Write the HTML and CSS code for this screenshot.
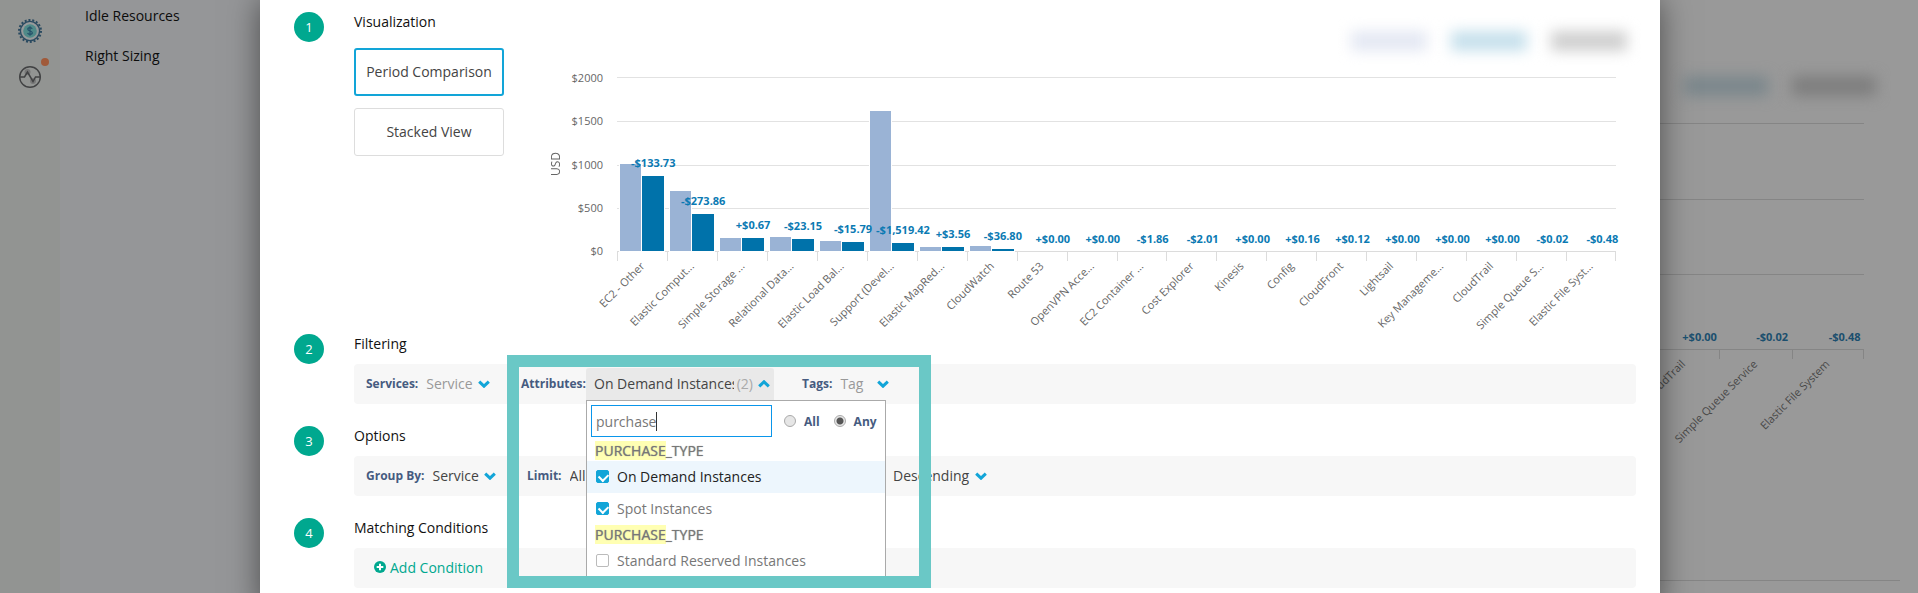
FILE: index.html
```html
<!DOCTYPE html>
<html lang="en">
<head>
<meta charset="utf-8">
<title>Cost report</title>
<link rel="stylesheet" href="styles.css">
</head>
<body>
<svg class="sprite" aria-hidden="true">
  <symbol id="chevron" viewBox="0 0 12 8"><path d="M1.2 1.6 6 6.2 10.8 1.6" fill="none" stroke="currentColor" stroke-width="3"/></symbol>
</svg>
<div class="page">
  <aside class="rail">
    <a class="rail-link" href="#costs" aria-label="Costs">
      <svg width="24" height="24" viewBox="0 0 24 24">
        <circle cx="12" cy="12" r="11" fill="none" stroke="#2a4a60" stroke-width="2" stroke-dasharray="2 1.84"/>
        <circle cx="12" cy="12" r="9.6" fill="#979a9b" stroke="#2a4a60" stroke-width="1.4"/>
        <circle cx="12" cy="12" r="6.8" fill="#4f8a89"/>
        <path d="M14.2 9.9c-.3-.8-1.100-1.200-2.200-1.200-1.300 0-2.200.6-2.200 1.600 0 2.300 4.500 1.100 4.500 3.500 0 1-.9 1.600-2.300 1.600-1.200 0-2.100-.5-2.400-1.400M12 7.300v9.400" fill="none" stroke="#24506a" stroke-width="1.200"/>
      </svg>
    </a>
    <a class="rail-link" href="#health" aria-label="Health">
      <svg width="24" height="24" viewBox="0 0 24 24">
        <circle cx="9.500" cy="7" r="3" fill="#777"/><circle cx="15" cy="16" r="3" fill="#777"/>
        <circle cx="12" cy="12" r="10.300" fill="none" stroke="#414243" stroke-width="1.400"/>
        <path d="M2 12h4.500L9.500 7l5.500 9.500 2.500-4.500H22" fill="none" stroke="#414243" stroke-width="1.500"/>
      </svg>
      <span class="dot"></span>
    </a>
  </aside>
  <nav class="nav">
    <a href="#idle">Idle Resources</a>
    <a href="#sizing">Right Sizing</a>
  </nav>
  <main class="report">
    <div class="totals totals-back" aria-hidden="true"><span class="blob blob-blue"></span><span class="blob blob-grey"></span></div>
    <div class="plot plot-back">
      <div class="lines"><i></i><i></i><i></i></div>
      <ol class="cols">
        <li class="col"><span class="bar"></span><span class="bar"><b class="delta">+$0.00</b></span><span class="cat">CloudTrail</span></li>
        <li class="col"><span class="bar"></span><span class="bar"><b class="delta">-$0.02</b></span><span class="cat">Simple Queue Service</span></li>
        <li class="col"><span class="bar"></span><span class="bar"><b class="delta">-$0.48</b></span><span class="cat">Elastic File System</span></li>
      </ol>
    </div>
    <hr class="rule">
  </main>
</div>

<div class="overlay">
  <div class="modal" role="dialog" aria-label="Edit report">
    <section class="step step-chart">
      <span class="num">1</span>
      <div class="body">
        <h2>Visualization</h2>
        <div class="viz">
          <div class="views">
            <button class="view view-on" type="button">Period Comparison</button>
            <button class="view" type="button">Stacked View</button>
          </div>
          <div class="chart">
            <div class="totals" aria-hidden="true"><span class="blob blob-pale"></span><span class="blob blob-blue"></span><span class="blob blob-grey"></span></div>
            <div class="graph">
              <span class="unit">USD</span>
              <div class="scale"><span>$2000</span><span>$1500</span><span>$1000</span><span>$500</span><span>$0</span></div>
              <div class="plot">
                <div class="lines"><i></i><i></i><i></i><i></i></div>
                <ol class="cols">
                  <li class="col"><span class="bar prev" style="height:50%"></span><span class="bar cur" style="height:43%"><b class="delta">-$133.73</b></span><span class="cat">EC2 - Other</span></li>
                  <li class="col"><span class="bar prev" style="height:34.5%"></span><span class="bar cur" style="height:21.3%"><b class="delta">-$273.86</b></span><span class="cat">Elastic Comput...</span></li>
                  <li class="col"><span class="bar prev" style="height:7.5%"></span><span class="bar cur" style="height:7.5%"><b class="delta">+$0.67</b></span><span class="cat">Simple Storage ...</span></li>
                  <li class="col"><span class="bar prev" style="height:8.1%"></span><span class="bar cur" style="height:6.9%"><b class="delta">-$23.15</b></span><span class="cat">Relational Data...</span></li>
                  <li class="col"><span class="bar prev" style="height:5.8%"></span><span class="bar cur" style="height:5.2%"><b class="delta">-$15.79</b></span><span class="cat">Elastic Load Bal...</span></li>
                  <li class="col"><span class="bar prev" style="height:80.5%"></span><span class="bar cur" style="height:4.6%"><b class="delta">-$1,519.42</b></span><span class="cat">Support (Devel...</span></li>
                  <li class="col"><span class="bar prev" style="height:2.3%"></span><span class="bar cur" style="height:2.4%"><b class="delta">+$3.56</b></span><span class="cat">Elastic MapRed...</span></li>
                  <li class="col"><span class="bar prev" style="height:3%"></span><span class="bar cur" style="height:1.2%"><b class="delta">-$36.80</b></span><span class="cat">CloudWatch</span></li>
                  <li class="col"><span class="bar"></span><span class="bar"><b class="delta">+$0.00</b></span><span class="cat">Route 53</span></li>
                  <li class="col"><span class="bar"></span><span class="bar"><b class="delta">+$0.00</b></span><span class="cat">OpenVPN Acce...</span></li>
                  <li class="col"><span class="bar"></span><span class="bar"><b class="delta">-$1.86</b></span><span class="cat">EC2 Container ...</span></li>
                  <li class="col"><span class="bar"></span><span class="bar"><b class="delta">-$2.01</b></span><span class="cat">Cost Explorer</span></li>
                  <li class="col"><span class="bar"></span><span class="bar"><b class="delta">+$0.00</b></span><span class="cat">Kinesis</span></li>
                  <li class="col"><span class="bar"></span><span class="bar"><b class="delta">+$0.16</b></span><span class="cat">Config</span></li>
                  <li class="col"><span class="bar"></span><span class="bar"><b class="delta">+$0.12</b></span><span class="cat">CloudFront</span></li>
                  <li class="col"><span class="bar"></span><span class="bar"><b class="delta">+$0.00</b></span><span class="cat">Lightsail</span></li>
                  <li class="col"><span class="bar"></span><span class="bar"><b class="delta">+$0.00</b></span><span class="cat">Key Manageme...</span></li>
                  <li class="col"><span class="bar"></span><span class="bar"><b class="delta">+$0.00</b></span><span class="cat">CloudTrail</span></li>
                  <li class="col"><span class="bar"></span><span class="bar"><b class="delta">-$0.02</b></span><span class="cat">Simple Queue S...</span></li>
                  <li class="col"><span class="bar"></span><span class="bar"><b class="delta">-$0.48</b></span><span class="cat">Elastic File Syst...</span></li>
                </ol>
              </div>
            </div>
          </div>
        </div>
      </div>
    </section>

    <section class="step">
      <span class="num">2</span>
      <div class="body">
        <h2>Filtering</h2>
        <div class="row row-filter">
          <div class="field field-services">
            <label for="services">Services:</label>
            <span class="pick"><select id="services" class="empty"><option>Service</option></select><svg class="chev"><use href="#chevron"/></svg></span>
          </div>
          <div class="field field-attributes">
            <label for="attributes">Attributes:</label>
            <div class="combo">
              <button id="attributes" class="combo-btn" type="button" aria-expanded="true"><span class="combo-text">On Demand Instances,</span><span class="count">(2)</span><svg class="chev up"><use href="#chevron"/></svg></button>
              <div class="panel">
                <div class="search">
                  <input class="query" type="text" value="purchase" aria-label="Search attributes">
                  <span class="caret"></span>
                  <div class="modes">
                    <label class="mode"><input type="radio" name="mode">All</label>
                    <label class="mode"><input type="radio" name="mode" checked>Any</label>
                  </div>
                </div>
                <div class="group"><mark>PURCHASE</mark>_TYPE</div>
                <label class="option option-on"><input type="checkbox" checked>On Demand Instances</label>
                <label class="option"><input type="checkbox" checked>Spot Instances</label>
                <div class="group"><mark>PURCHASE</mark>_TYPE</div>
                <label class="option"><input type="checkbox">Standard Reserved Instances</label>
              </div>
            </div>
          </div>
          <div class="field">
            <label for="tags">Tags:</label>
            <span class="pick pick-wide"><select id="tags" class="empty"><option>Tag</option></select><svg class="chev"><use href="#chevron"/></svg></span>
          </div>
          <div class="frame"></div>
        </div>
      </div>
    </section>

    <section class="step">
      <span class="num">3</span>
      <div class="body">
        <h2>Options</h2>
        <div class="row">
          <div class="field field-group">
            <label for="group">Group By:</label>
            <span class="pick"><select id="group"><option>Service</option></select><svg class="chev"><use href="#chevron"/></svg></span>
          </div>
          <div class="field field-limit">
            <label for="limit">Limit:</label>
            <span class="pick"><select id="limit"><option>All</option></select><svg class="chev"><use href="#chevron"/></svg></span>
          </div>
          <div class="field">
            <span class="pick"><select aria-label="Sort order"><option>Descending</option></select><svg class="chev"><use href="#chevron"/></svg></span>
          </div>
        </div>
      </div>
    </section>

    <section class="step">
      <span class="num">4</span>
      <div class="body">
        <h2>Matching Conditions</h2>
        <div class="row row-add">
          <button class="add" type="button"><svg width="12" height="12" viewBox="0 0 12 12"><circle cx="6" cy="6" r="6" fill="currentColor"/><path d="M6 2.700v6.600M2.700 6h6.600" stroke="#fff" stroke-width="2"/></svg>Add Condition</button>
        </div>
      </div>
    </section>
  </div>
</div>
</body>
</html>
```
FILE: styles.css
```css
* { box-sizing: border-box; }
html, body { height: 100%; }
body {
  margin: 0;
  overflow: hidden;
  position: relative;
  font-family: "Open Sans", "Noto Sans", sans-serif;
  font-size: 14px;
  color: #444;
  background: #999;
}
button, input, select { font: inherit; color: inherit; }
.sprite { display: none; }

/* Dimmed report page */
.page { display: flex; min-height: 100%; }
.rail {
  width: 60px;
  padding-top: 19px;
  display: flex;
  flex-direction: column;
  align-items: center;
  gap: 22px;
  background: #929492;
}
.rail-link { position: relative; height: 24px; }
.rail-link svg { display: block; }
.dot {
  position: absolute;
  top: -7px;
  right: -7px;
  width: 8px;
  height: 8px;
  border-radius: 50%;
  background: #a05a3a;
}
.nav {
  width: 200px;
  padding: 6px 25px;
  display: flex;
  flex-direction: column;
  gap: 20px;
  background: #959698;
}
.nav a { line-height: 20px; color: #0c0c0c; text-decoration: none; }
.report {
  flex: 1;
  padding: 76px 18px 0 154px;
}
.totals {
  display: flex;
  align-items: center;
  justify-content: flex-end;
  gap: 24px;
  height: 14px;
}
.blob { width: 76px; height: 20px; filter: blur(7px); }
.blob-pale { background: #e4e8f3; }
.blob-blue { background: #c6e0ec; }
.blob-grey { background: #cfcfcf; }
.totals-back { height: 20px; padding-right: 24px; }
.totals-back .blob { width: 84px; }
.totals-back .blob-blue { background: #7b878c; }
.totals-back .blob-grey { background: #7e7e7e; }
.plot-back { height: 227px; margin: 27px 36px 0 0; }
.plot-back .cols { justify-content: flex-end; }
.plot-back .col { flex: 0 0 5%; }
.plot-back .lines i, .plot-back .cols, .plot-back .col, .plot-back .col:last-child { border-color: #858585; }
.plot-back .delta { color: #1b4f6e; }
.plot-back .cat { color: #484848; }
.rule { margin: 230px 0 0; border: 0; border-top: 1px solid #858585; }

/* Modal */
.overlay {
  position: absolute;
  inset: 0;
  padding: 0 258px 0 260px;
}
.modal {
  min-height: 100%;
  padding: 12px 24px 0 34px;
  background: #fff;
  box-shadow: 0 0 30px rgba(0, 0, 0, .5);
}
.step { display: flex; gap: 30px; padding-bottom: 22px; }
.step-chart { padding-bottom: 82px; }
.num {
  flex: none;
  width: 30px;
  height: 30px;
  border-radius: 50%;
  background: #00a88f;
  color: #fff;
  font-size: 13px;
  line-height: 30px;
  text-align: center;
}
.body { flex: 1; min-width: 0; }
h2 {
  margin: 0;
  height: 30px;
  font-size: 14px;
  font-weight: 400;
  line-height: 20px;
  color: #111;
}
.step-chart h2 { height: 22px; }
.viz { display: flex; gap: 46px; }
.views {
  width: 150px;
  padding-top: 14px;
  display: flex;
  flex-direction: column;
  gap: 12px;
}
.view {
  height: 48px;
  padding: 0 0 2px;
  border: 1px solid #ddd;
  border-radius: 3px;
  background: #fff;
}
.view-on { border: 2px solid #12a5d8; }

/* Chart */
.chart { flex: 1; padding-right: 20px; }
.chart .totals { margin-right: -11px; }
.graph {
  display: flex;
  margin-top: 29px;
  height: 175px;
}
.unit {
  align-self: center;
  width: 12px;
  writing-mode: vertical-rl;
  transform: rotate(180deg);
  font-size: 12px;
  line-height: 12px;
  color: #666;
}
.scale {
  width: 41px;
  margin: -7px 14px -7px 0;
  display: flex;
  flex-direction: column;
  justify-content: space-between;
  text-align: right;
  font-size: 11px;
  line-height: 16px;
  color: #666;
}
.plot { position: relative; flex: 1; }
.lines {
  position: absolute;
  inset: 0;
  display: flex;
  flex-direction: column;
}
.lines i { flex: 1; border-top: 1px solid #e2e2e2; }
.cols {
  position: relative;
  display: flex;
  height: 100%;
  margin: 0;
  padding: 0;
  list-style: none;
  border-bottom: 1px solid #dcdcdc;
}
.col {
  position: relative;
  flex: 1;
  display: flex;
  align-items: flex-end;
  gap: 1px;
  padding: 0 3px;
}
.col::before, .col:last-child::after {
  content: "";
  position: absolute;
  top: 100%;
  left: 0;
  height: 10px;
  border-left: 1px solid #dcdcdc;
}
.col:last-child::after { left: auto; right: 0; }
.plot-back .col::before, .plot-back .col::after { border-color: #858585; }
.bar { position: relative; flex: 1; }
.prev { background: #9ab3d5; box-shadow: 0 0 0 1px #fff; }
.cur { background: #0072aa; box-shadow: 0 0 0 1px #fff; }
.delta {
  position: absolute;
  z-index: 1;
  bottom: 100%;
  left: 50%;
  transform: translateX(-50%);
  padding-bottom: 4px;
  font-size: 11px;
  line-height: 16px;
  white-space: nowrap;
  color: #0b7ab3;
}
.cur .delta { padding-bottom: 5px; }
.cat {
  position: absolute;
  top: 100%;
  right: 50%;
  margin-top: 5px;
  transform: rotate(-45deg);
  transform-origin: 100% 50%;
  font-size: 11px;
  line-height: 16px;
  white-space: nowrap;
  color: #666;
}

/* Form rows */
.row {
  position: relative;
  display: flex;
  align-items: center;
  height: 40px;
  padding-left: 12px;
  border-radius: 4px;
  background: #f7f7f7;
}
.row-filter { z-index: 1; }
.row-add { padding-left: 20px; }
.field { display: flex; align-items: center; gap: 8px; }
.field > label, .mode { font-size: 12px; font-weight: 700; color: #465b80; }
.field > label { padding-bottom: 1px; }
.field-services { width: 155px; }
.field-group { width: 161px; }
.field-attributes { width: 281px; gap: 0; justify-content: space-between; padding-right: 28px; }
.field-limit { width: 366px; }
.pick { display: flex; align-items: center; gap: 5px; }
.pick-wide { gap: 13px; }
select {
  appearance: none;
  padding: 0 0 2px;
  border: 0;
  background: none;
}
.empty { color: #999; }
.chev { flex: none; width: 12px; height: 8px; color: #12a5d8; }
.up { transform: rotate(180deg); }
.combo { position: relative; width: 188px; }
.combo-btn {
  width: 100%;
  height: 32px;
  padding: 0 4px 1px 8px;
  display: flex;
  align-items: center;
  gap: 3px;
  border: 0;
  border-radius: 3px 3px 0 0;
  background: #e9e9e9;
}
.combo-text { flex: 1; overflow: hidden; white-space: nowrap; text-align: left; }
.count { color: #aaa; margin-right: 2px; }
.panel {
  position: absolute;
  top: 100%;
  left: 0;
  width: 300px;
  border: 1px solid #aaa;
  background: #fff;
  color: #777;
}
.search {
  position: relative;
  display: flex;
  align-items: center;
  gap: 12px;
  padding: 4px;
}
.query {
  width: 181px;
  height: 32px;
  padding: 0 4px;
  border: 1px solid #0a96eb;
  outline: none;
}
.caret {
  position: absolute;
  left: 69px;
  top: 11px;
  width: 1px;
  height: 19px;
  background: #333;
}
.modes { display: flex; gap: 14px; }
.mode { display: flex; align-items: center; gap: 8px; }
.mode input {
  appearance: none;
  width: 12px;
  height: 12px;
  margin: 0;
  border: 1px solid #aaa;
  border-radius: 50%;
  background: #e6e6e6;
}
.mode input:checked { background: radial-gradient(circle, #555 3px, #e6e6e6 4px); }
.group {
  height: 20px;
  padding-left: 8px;
  line-height: 20px;
  font-weight: 500;
  text-shadow: 0 0 1px #888;
}
mark { background: #ffffb3; color: inherit; }
.option {
  display: flex;
  align-items: center;
  gap: 8px;
  height: 32px;
  padding: 0 0 1px 9px;
}
.option-on { background: #edf6fd; color: #222; }
.option input {
  appearance: none;
  position: relative;
  width: 13px;
  height: 13px;
  margin: 0;
  border: 1px solid #bbb;
  border-radius: 2px;
  background: #fff;
}
.option input:checked { background: #12a5d8; border-color: #12a5d8; }
.option input:checked::before {
  content: "";
  position: absolute;
  left: 3px;
  top: 1px;
  width: 5px;
  height: 7px;
  border: solid #fff;
  border-width: 0 2px 2px 0;
  transform: rotate(45deg);
}
.frame {
  position: absolute;
  top: -9px;
  left: 153px;
  width: 424px;
  height: 233px;
  border: 12px solid #6ac8c6;
  pointer-events: none;
}
.add {
  display: flex;
  align-items: center;
  gap: 4px;
  padding: 0 0 2px;
  border: 0;
  background: none;
  color: #00a88f;
}
```
